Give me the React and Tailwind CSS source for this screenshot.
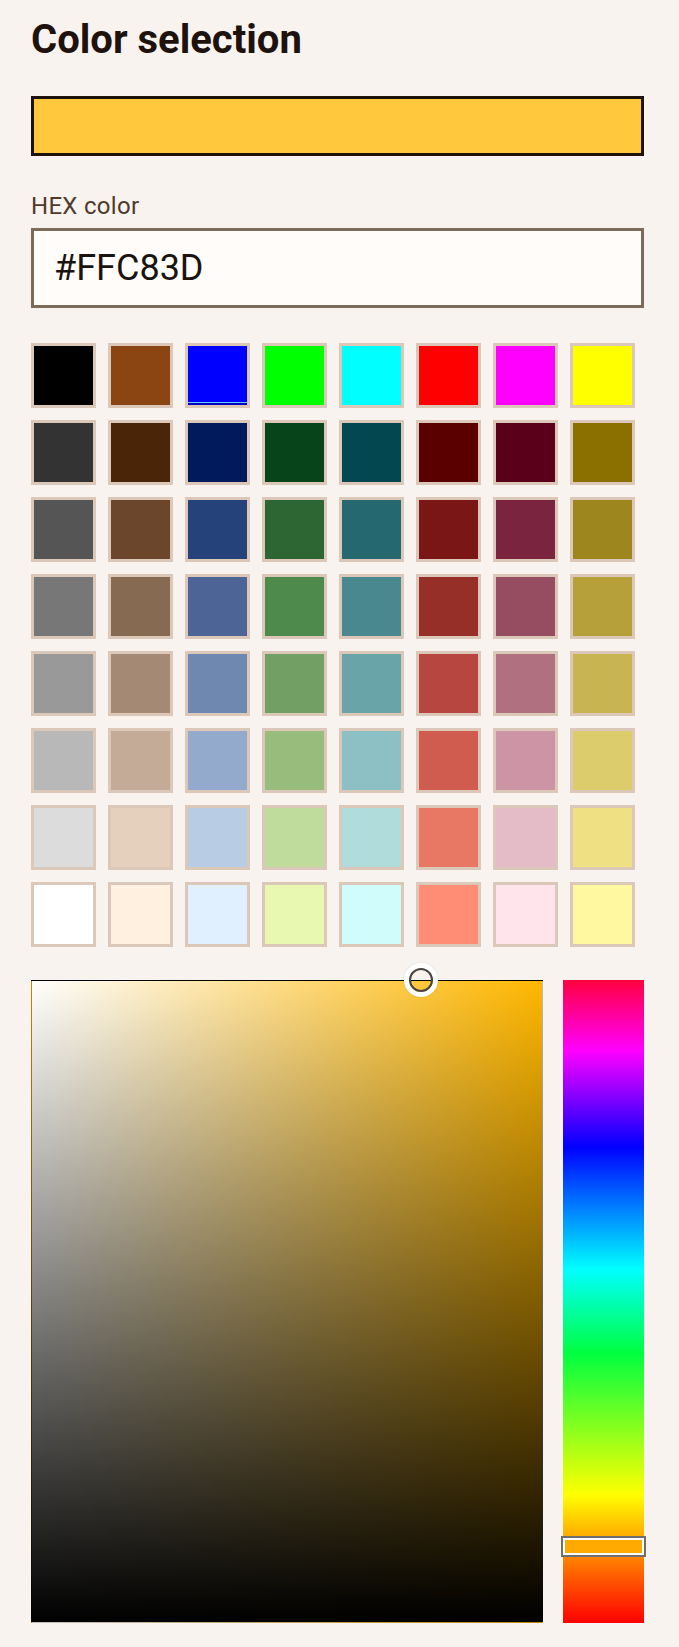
import React from "react";

const rows = [
  ["#000000", "#8B4513", "#0000FF", "#00FF00", "#00FFFF", "#FF0000", "#FF00FF", "#FFFF00"],
  ["#333333", "#4B2508", "#001A5C", "#08441A", "#034850", "#5A0000", "#5A001A", "#8B7000"],
  ["#555555", "#6B452C", "#25427A", "#2E6633", "#256870", "#7A1616", "#7A2440", "#9E861E"],
  ["#777777", "#876A52", "#4D6496", "#4F8A4D", "#4A8890", "#962F28", "#964D62", "#B5A03A"],
  ["#999999", "#A48A74", "#6E88B0", "#72A064", "#68A4A8", "#B84640", "#B07080", "#C8B450"],
  ["#B8B8B8", "#C4AB98", "#94AACC", "#98BC7C", "#8CC0C4", "#D05C50", "#CC94A4", "#DCCC6C"],
  ["#DCDCDC", "#E4D0BC", "#B8CCE4", "#C0DC9C", "#B0DCDC", "#E87864", "#E4BCC8", "#F0E084"],
  ["#FFFFFF", "#FFF0E0", "#E0F0FF", "#E8F8B0", "#D0FCFC", "#FF8C74", "#FFE4EC", "#FFF8A0"],
];

export default function App() {
  return (
    <div className="min-h-screen w-[679px] bg-[#f9f3ef] pl-[31px] pr-[35px] pt-[16px] pb-[24px] font-['Roboto','Liberation_Sans',sans-serif]">
      <h1 className="text-[40px] leading-[48px] font-bold text-[#1e130c]">Color selection</h1>

      <div className="mt-[32px] h-[60px] border-[3px] border-[#1e130c] bg-[#FFC83D]" />

      <div className="mt-[37px] text-[24px] leading-[26px] font-normal tracking-[0.3px] text-[#4f3b2b]">HEX color</div>

      <div className="mt-[9px] h-[80px] border-[3px] border-[#7c6a5a] bg-[#fffcf9] flex items-center pl-[20px] text-[36px] leading-[42px] text-[#1a1410]">
        #FFC83D
      </div>

      <div className="mt-[35px] grid grid-cols-[repeat(8,65px)] gap-[12px]">
        {rows.flat().map((c, i) => (
          <div
            key={i}
            className={
              "h-[65px] w-[65px] border-[3px] border-[#dcc8b8] " +
              (i === 2 ? "shadow-[inset_0_-2px_0_0_#0000c0,inset_0_-3px_0_0_#60c8ff]" : "")
            }
            style={{ backgroundColor: c }}
          />
        ))}
      </div>

      <div className="mt-[33px] flex gap-[20px]">
        <div className="relative h-[643px] w-[512px] border border-black/25 bg-[linear-gradient(to_top,#000000,rgba(0,0,0,0)),linear-gradient(to_right,#ffffff,#FFB700)]">
          <div className="absolute left-[372px] top-[-18px] flex h-[34px] w-[34px] items-center justify-center rounded-full border-[5px] border-white shadow-[0_0_2px_rgba(0,0,0,0.15)]">
            <div className="h-[24px] w-[24px] rounded-full border-2 border-[#4a4540]" />
          </div>
        </div>
        <div className="relative h-[643px] w-[81px] bg-[linear-gradient(to_bottom,#ff0040_0%,#ff00ff_11%,#0000ff_26%,#00ffff_45%,#00ff40_58%,#ffff00_80%,#ff8000_90%,#ff0000_100%)]">
          <div className="absolute left-[-2px] top-[556px] h-[21px] w-[85px] border-2 border-[#6e6e6e] bg-[#ffaa00] shadow-[inset_0_0_0_2px_#ffffff]" />
        </div>
      </div>
    </div>
  );
}
